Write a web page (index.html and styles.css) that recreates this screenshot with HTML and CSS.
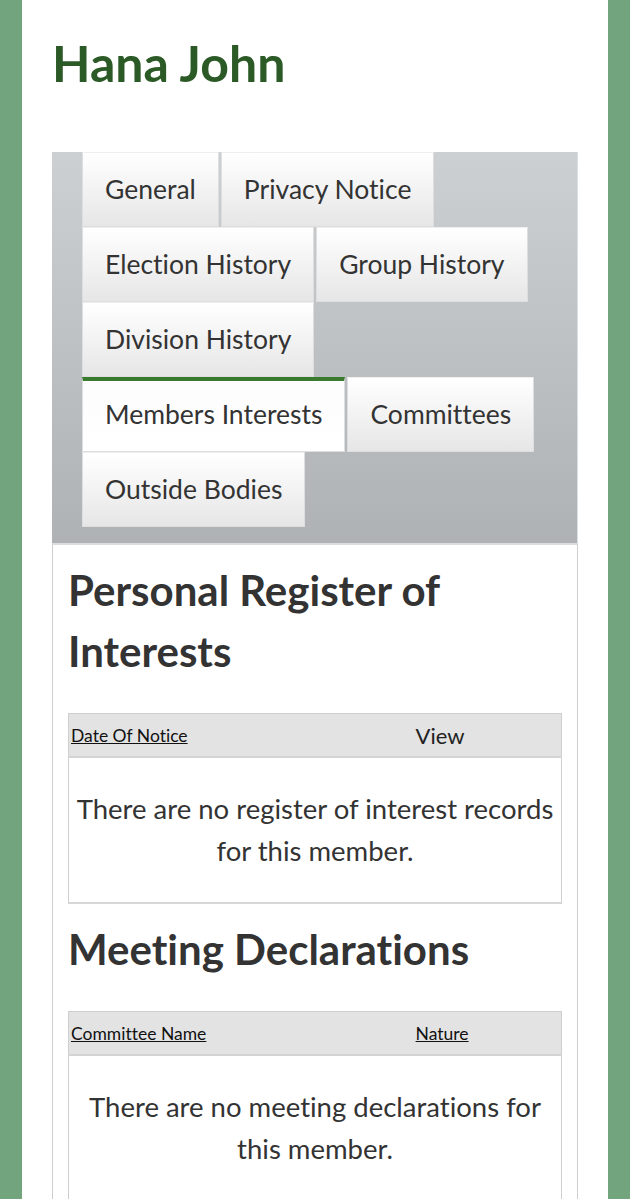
FILE: index.html
```html
<!DOCTYPE html>
<html>

	<head>
		<meta charset="UTF-8">
		<meta name="viewport" content="width=device-width, initial-scale=1.0">
		<title>Hana John</title>
		<link rel="stylesheet" href="styles.css">
	</head>

	<body>
		<div class="page">
			<h1 class="name">Hana John</h1>
			<div class="tabs">
				<a class="tab" href="#">General</a>
				<a class="tab" href="#">Privacy Notice</a>
				<a class="tab" href="#">Election History</a>
				<a class="tab" href="#">Group History</a>
				<a class="tab" href="#">Division History</a>
				<a class="tab active" href="#">Members Interests</a>
				<a class="tab" href="#">Committees</a>
				<a class="tab" href="#">Outside Bodies</a>
			</div>
			<div class="panel">
				<h2>Personal Register of Interests</h2>
				<table class="grid">
					<thead>
						<tr>
							<th class="c1"><a href="#">Date Of Notice</a></th>
							<th class="c2 plain">View</th>
						</tr>
					</thead>
					<tbody>
						<tr>
							<td colspan="2" class="empty">There are no register of interest records for this member.</td>
						</tr>
					</tbody>
				</table>

				<h2>Meeting Declarations</h2>
				<table class="grid">
					<thead>
						<tr>
							<th class="c1"><a href="#">Committee Name</a></th>
							<th class="c2"><a href="#">Nature</a></th>
						</tr>
					</thead>
					<tbody>
						<tr>
							<td colspan="2" class="empty">There are no meeting declarations for this member.</td>
						</tr>
					</tbody>
				</table>
			</div>
		</div>
	</body>

</html>
```

FILE: styles.css
```css
body {
	margin: 0;
	background: #72a47e;
	font-family: Lato, "Liberation Sans", sans-serif;
	font-variant-ligatures: none;
	color: #333;
}

.page {
	margin: 0 22px;
	padding: 33px 30px 40px;
	background: #fff;
	min-height: 1200px;
}

.name {
	margin: 0 0 59px;
	font-size: 50px;
	line-height: 60px;
	font-weight: 700;
	color: #2c5a27;
}

.tabs {
	display: flex;
	flex-wrap: wrap;
	padding: 0 0 16px 30px;
	background: linear-gradient(#cdd0d3, #aeb2b5);
	border-right: 1px solid #dcdfe1;
}

.tab {
	display: block;
	margin-right: 2px;
	padding: 20px 22px 21px;
	font-size: 26.5px;
	line-height: 32px;
	color: #333;
	text-decoration: none;
	background: linear-gradient(#fff, #e6e6e6);
	border: 1px solid #dedede;
	border-top-color: #eee;
	box-sizing: border-box;
	height: 75px;
}

.tab.active {
	border-top: 4px solid #3a7a2e;
	padding-top: 17px;
	background: linear-gradient(#fcfcfc, #fff);
}

.panel {
	padding: 0 15px;
	border: 1px solid #cfcfcf;
	border-top: 2px solid #dcdcdc;
}

.panel h2 {
	margin: 15px 0 31px;
	font-size: 42px;
	line-height: 61px;
	font-weight: 700;
	color: #333;
}

.grid {
	width: 100%;
	border-collapse: collapse;
	border: 1px solid #cfcfcf;
	border-bottom: 2px solid #d6d6d6;
}

.grid th {
	height: 42px;
	padding: 0 2px;
	background: #e3e3e3;
	border-bottom: 2px solid #d4d4d4;
	text-align: left;
	font-weight: 400;
	vertical-align: middle;
}

.grid th.c1 {
	width: 70%;
}

.grid th a {
	font-size: 17.5px;
	color: #111;
	text-decoration: underline;
}

.grid th.plain {
	font-size: 22px;
	color: #222;
}

.empty {
	padding: 30px 6px;
	text-align: center;
	font-size: 27.5px;
	line-height: 42px;
	color: #333;
}
```
